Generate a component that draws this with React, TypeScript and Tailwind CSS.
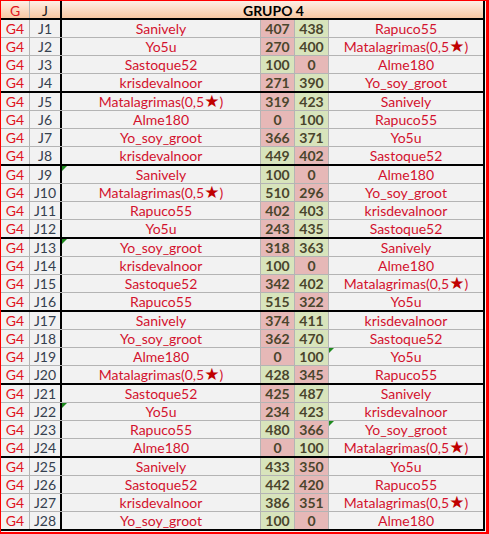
import React from "react";

type Row = [string, number, number, string];

const rows: Row[] = [
  ["Sanively", 407, 438, "Rapuco55"],
  ["Yo5u", 270, 400, "M"],
  ["Sastoque52", 100, 0, "Alme180"],
  ["krisdevalnoor", 271, 390, "Yo_soy_groot"],
  ["M", 319, 423, "Sanively"],
  ["Alme180", 0, 100, "Rapuco55"],
  ["Yo_soy_groot", 366, 371, "Yo5u"],
  ["krisdevalnoor", 449, 402, "Sastoque52"],
  ["Sanively", 100, 0, "Alme180"],
  ["M", 510, 296, "Yo_soy_groot"],
  ["Rapuco55", 402, 403, "krisdevalnoor"],
  ["Yo5u", 243, 435, "Sastoque52"],
  ["Yo_soy_groot", 318, 363, "Sanively"],
  ["krisdevalnoor", 100, 0, "Alme180"],
  ["Sastoque52", 342, 402, "M"],
  ["Rapuco55", 515, 322, "Yo5u"],
  ["Sanively", 374, 411, "krisdevalnoor"],
  ["Yo_soy_groot", 362, 470, "Sastoque52"],
  ["Alme180", 0, 100, "Yo5u"],
  ["M", 428, 345, "Rapuco55"],
  ["Sastoque52", 425, 487, "Sanively"],
  ["Yo5u", 234, 423, "krisdevalnoor"],
  ["Rapuco55", 480, 366, "Yo_soy_groot"],
  ["Alme180", 0, 100, "M"],
  ["Sanively", 433, 350, "Yo5u"],
  ["Sastoque52", 442, 420, "Rapuco55"],
  ["krisdevalnoor", 386, 351, "M"],
  ["Yo_soy_groot", 100, 0, "Alme180"],
];

const tri1 = new Set([9, 13, 22]);
const tri2 = new Set([19, 23]);

function Name({ n }: { n: string }) {
  if (n === "M") {
    return (
      <span>
        Matalagrimas(0,5
        <span
          className="text-[#c00000] text-[17px] leading-none font-bold"
          style={{ fontFamily: "'DejaVu Sans', sans-serif" }}
        >
          ★
        </span>
        )
      </span>
    );
  }
  return <span>{n}</span>;
}

function Tri() {
  return (
    <div className="absolute left-0 top-0 w-0 h-0 border-t-[5px] border-t-[#1e8a1e] border-r-[5px] border-r-transparent" />
  );
}

export default function App() {
  return (
    <div
      className="w-[489px] h-[534px] bg-white border-t border-l border-r-[3px] border-b-2 border-[#ff0000] text-[14px]"
      style={{ fontFamily: "Lato, 'Liberation Sans', sans-serif" }}
    >
      <div className="pr-px pb-px bg-[#f4f4f4] w-[485px]">
        <div className="border-r-2 border-b-2 border-black w-[484px]">
          {/* header */}
          <div className="flex h-[19px] border-b-2 border-black bg-gradient-to-b from-[#fdefe6] to-[#f8c7a2] leading-[17px] pt-px">
            <div className="w-[29px] border-r border-[#b4b4b4] text-center text-[#e0141e] -mt-px pt-px">G</div>
            <div className="w-[32px] border-r-2 border-black text-center text-[#1a1a1a] -mt-px pt-px">J</div>
            <div className="flex-1 text-center font-bold text-black pl-[2px]">GRUPO 4</div>
          </div>
          {rows.map((r, i) => {
            const idx = i + 1;
            const last = idx % 4 === 0;
            const lastAll = idx === 28;
            const [a, s1, s2, b] = r;
            const g1 = s1 > s2;
            return (
              <div
                key={idx}
                className={
                  "flex bg-[#f2f2f2] leading-[17px] " +
                  (lastAll ? "h-[17px]" : last ? "h-[19px] border-b-2 border-black" : "h-[18px] border-b border-[#b4b4b4]")
                }
              >
                <div className="w-[29px] border-r border-[#b4b4b4] text-center text-[#e0141e]">G4</div>
                <div className="w-[32px] border-r-2 border-black text-center text-[#35404e]">J{idx}</div>
                <div className="relative w-[199px] border-r border-[#b4b4b4] text-center text-[#d3122e]">
                  {tri1.has(idx) && <Tri />}
                  <Name n={a} />
                </div>
                <div
                  className={
                    "w-[34px] border-r border-[#b4b4b4] text-center font-bold text-[#4a452c] " +
                    (g1 ? "bg-[#d8e4bc]" : "bg-[#e6b8b7]")
                  }
                >
                  {s1}
                </div>
                <div
                  className={
                    "w-[34px] border-r border-[#b4b4b4] text-center font-bold text-[#4a452c] " +
                    (g1 ? "bg-[#e6b8b7]" : "bg-[#d8e4bc]")
                  }
                >
                  {s2}
                </div>
                <div className="relative flex-1 text-center text-[#d3122e]">
                  {tri2.has(idx) && <Tri />}
                  <Name n={b} />
                </div>
              </div>
            );
          })}
        </div>
      </div>
    </div>
  );
}
